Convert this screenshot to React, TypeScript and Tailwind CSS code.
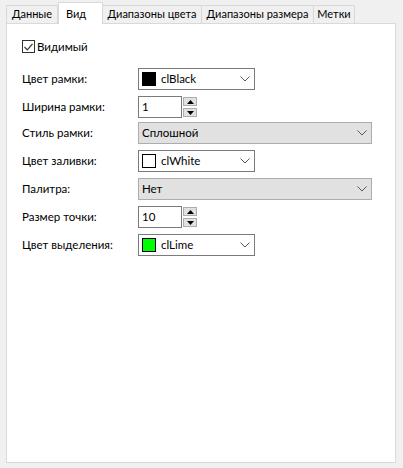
import React from 'react';

const tabs = [
  { label: 'Данные', w: 'w-[52px]' },
  { label: 'Вид', w: 'w-[45px]', active: true },
  { label: 'Диапазоны цвета', w: 'w-[100px]' },
  { label: 'Диапазоны размера', w: 'w-[113px]' },
  { label: 'Метки', w: 'w-[42px]' },
];

const Chevron = () => (
  <svg width="10" height="6" viewBox="0 0 10 6" className="shrink-0">
    <path d="M0.5 0.5 L5 5 L9.5 0.5" fill="none" stroke="#5a5a5a" strokeWidth="1" />
  </svg>
);

const ColorCombo = ({ color, name }: { color: string; name: string }) => (
  <div className="flex h-[22px] w-[117px] items-center border border-[#7a7a7a] bg-white pl-[3px] pr-[4px]">
    <div className="h-[14px] w-[14px] border border-black" style={{ background: color }} />
    <span className="ml-[5px] flex-1">{name}</span>
    <Chevron />
  </div>
);

const Combo = ({ value }: { value: string }) => (
  <div className="flex h-[22px] w-[234px] items-center border border-[#adadad] bg-[#e1e1e1] pl-[3px] pr-[4px]">
    <span className="flex-1">{value}</span>
    <Chevron />
  </div>
);

const Spin = ({ value }: { value: string }) => (
  <div className="flex h-[22px] items-center">
    <div className="flex h-[22px] w-[44px] items-center border border-[#7a7a7a] bg-white pl-[3px]">{value}</div>
    <div className="ml-[1px] flex flex-col gap-[2px]">
      <div className="flex h-[9px] w-[14px] items-center justify-center border border-[#adadad] bg-[#e1e1e1]">
        <svg width="7" height="4" viewBox="0 0 7 4"><path d="M3.5 0 L7 4 L0 4 Z" fill="#000" /></svg>
      </div>
      <div className="flex h-[9px] w-[14px] items-center justify-center border border-[#adadad] bg-[#e1e1e1]">
        <svg width="7" height="4" viewBox="0 0 7 4"><path d="M0 0 L7 0 L3.5 4 Z" fill="#000" /></svg>
      </div>
    </div>
  </div>
);

const rows: { label: string; mt: string; control: React.ReactNode }[] = [
  { label: 'Цвет рамки:', mt: 'mt-[15px]', control: <ColorCombo color="#000000" name="clBlack" /> },
  { label: 'Ширина рамки:', mt: 'mt-[6px]', control: <Spin value="1" /> },
  { label: 'Стиль рамки:', mt: 'mt-[4px]', control: <Combo value="Сплошной" /> },
  { label: 'Цвет заливки:', mt: 'mt-[6px]', control: <ColorCombo color="#ffffff" name="clWhite" /> },
  { label: 'Палитра:', mt: 'mt-[6px]', control: <Combo value="Нет" /> },
  { label: 'Размер точки:', mt: 'mt-[6px]', control: <Spin value="10" /> },
  { label: 'Цвет выделения:', mt: 'mt-[6px]', control: <ColorCombo color="#00ff00" name="clLime" /> },
];

export default function App() {
  return (
    <div className="h-[468px] w-[403px] bg-[#f0f0f0] text-[11.5px] text-black whitespace-nowrap" style={{ fontFamily: 'Lato, "Liberation Sans", sans-serif' }}>
      <div className="flex h-[23px] items-end pl-[6px] text-[11px]">
        {tabs.map((t) =>
          t.active ? (
            <div key={t.label} className={`${t.w} relative z-10 -mb-px flex h-[22px] items-start border border-b-0 border-[#d9d9d9] bg-white pl-[7px] pt-[3px]`}>
              {t.label}
            </div>
          ) : (
            <div key={t.label} className={`${t.w} -ml-px flex h-[18px] items-center justify-center border border-b-0 border-[#d9d9d9] bg-[#f0f0f0] first:ml-0`}>
              {t.label}
            </div>
          )
        )}
      </div>
      <div className="mx-[6px] h-[440px] w-[390px] border border-[#d9d9d9] bg-white pl-[15px] pt-[16px]">
        <div className="flex h-[13px] items-center">
          <div className="flex h-[13px] w-[13px] items-center justify-center border border-[#333333] bg-white">
            <svg width="9" height="8" viewBox="0 0 9 8"><path d="M0.5 4 L3.3 6.8 L8.5 0.8" fill="none" stroke="#333" strokeWidth="1.2" /></svg>
          </div>
          <span className="ml-[2px]">Видимый</span>
        </div>
        {rows.map((r) => (
          <div key={r.label} className={`${r.mt} flex h-[22px] items-center`}>
            <span className="w-[116px] shrink-0">{r.label}</span>
            {r.control}
          </div>
        ))}
      </div>
    </div>
  );
}
